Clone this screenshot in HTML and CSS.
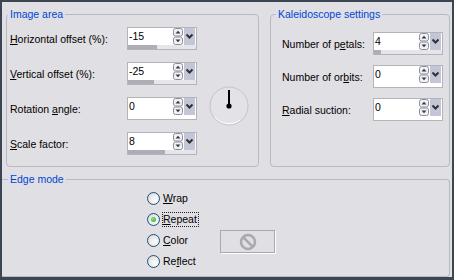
FILE: index.html
```html
<!DOCTYPE html>
<html>
<head>
<meta charset="utf-8">
<link rel="stylesheet" href="styles.css">
</head>
<body>
<div class="frame">
  <div class="toprow">
    <fieldset class="group image">
      <legend>Image area</legend>
      <div class="form">
        <span class="lbl"><u>H</u>orizontal offset (%):</span>
        <div class="spin">
          <div class="spin-top">
            <span class="val">-15</span>
            <svg class="arrows" width="10" height="17" viewBox="0 0 10 17"><rect class="btn" x="0.5" y="0.5" width="9" height="7.5" rx="2"/><path class="tri" d="M2.5 5.5 L5 2.8 L7.5 5.5Z"/><rect class="btn" x="0.5" y="9" width="9" height="7.5" rx="2"/><path class="tri" d="M2.5 11.5 L5 14.2 L7.5 11.5Z"/></svg>
            <span class="drop"><svg width="11" height="17" viewBox="0 0 11 17"><path d="M2.5 6.5 L5.5 9.5 L8.5 6.5"/></svg></span>
          </div>
          <div class="bar"><span class="fill" style="width:29px"></span></div>
        </div>
        <span class="lbl"><u>V</u>ertical offset (%):</span>
        <div class="spin">
          <div class="spin-top">
            <span class="val">-25</span>
            <svg class="arrows" width="10" height="17" viewBox="0 0 10 17"><rect class="btn" x="0.5" y="0.5" width="9" height="7.5" rx="2"/><path class="tri" d="M2.5 5.5 L5 2.8 L7.5 5.5Z"/><rect class="btn" x="0.5" y="9" width="9" height="7.5" rx="2"/><path class="tri" d="M2.5 11.5 L5 14.2 L7.5 11.5Z"/></svg>
            <span class="drop"><svg width="11" height="17" viewBox="0 0 11 17"><path d="M2.5 6.5 L5.5 9.5 L8.5 6.5"/></svg></span>
          </div>
          <div class="bar"><span class="fill" style="width:26px"></span></div>
        </div>
        <span class="lbl">Rotation <u>a</u>ngle:</span>
        <div class="spin">
          <div class="spin-top">
            <span class="val">0</span>
            <svg class="arrows" width="10" height="17" viewBox="0 0 10 17"><rect class="btn" x="0.5" y="0.5" width="9" height="7.5" rx="2"/><path class="tri" d="M2.5 5.5 L5 2.8 L7.5 5.5Z"/><rect class="btn" x="0.5" y="9" width="9" height="7.5" rx="2"/><path class="tri" d="M2.5 11.5 L5 14.2 L7.5 11.5Z"/></svg>
            <span class="drop"><svg width="11" height="17" viewBox="0 0 11 17"><path d="M2.5 6.5 L5.5 9.5 L8.5 6.5"/></svg></span>
          </div>
          <div class="bar empty"></div>
        </div>
        <span class="lbl"><u>S</u>cale factor:</span>
        <div class="spin">
          <div class="spin-top">
            <span class="val">8</span>
            <svg class="arrows" width="10" height="17" viewBox="0 0 10 17"><rect class="btn" x="0.5" y="0.5" width="9" height="7.5" rx="2"/><path class="tri" d="M2.5 5.5 L5 2.8 L7.5 5.5Z"/><rect class="btn" x="0.5" y="9" width="9" height="7.5" rx="2"/><path class="tri" d="M2.5 11.5 L5 14.2 L7.5 11.5Z"/></svg>
            <span class="drop"><svg width="11" height="17" viewBox="0 0 11 17"><path d="M2.5 6.5 L5.5 9.5 L8.5 6.5"/></svg></span>
          </div>
          <div class="bar"><span class="fill" style="width:37px"></span></div>
        </div>
        <svg class="dial" width="40" height="40" viewBox="0 0 40 40">
          <circle cx="20" cy="20" r="19" fill="#e3e2e6" stroke="#c4c4cc" stroke-width="1"/>
          <path d="M6 31 A18 18 0 0 0 31 34" fill="none" stroke="#ffffff" stroke-width="1"/>
          <line x1="20" y1="20" x2="20" y2="4" stroke="#000" stroke-width="2"/>
          <circle cx="20" cy="20" r="2.6" fill="#000"/>
        </svg>
      </div>
    </fieldset>
    <fieldset class="group kal">
      <legend>Kaleidoscope settings</legend>
      <div class="form2">
        <span class="lbl">Number of p<u>e</u>tals:</span>
        <div class="spin">
          <div class="spin-top">
            <span class="val">4</span>
            <svg class="arrows" width="10" height="17" viewBox="0 0 10 17"><rect class="btn" x="0.5" y="0.5" width="9" height="7.5" rx="2"/><path class="tri" d="M2.5 5.5 L5 2.8 L7.5 5.5Z"/><rect class="btn" x="0.5" y="9" width="9" height="7.5" rx="2"/><path class="tri" d="M2.5 11.5 L5 14.2 L7.5 11.5Z"/></svg>
            <span class="drop"><svg width="11" height="17" viewBox="0 0 11 17"><path d="M2.5 6.5 L5.5 9.5 L8.5 6.5"/></svg></span>
          </div>
          <div class="bar"><span class="fill" style="width:7px"></span></div>
        </div>
        <span class="lbl">Number of or<u>b</u>its:</span>
        <div class="spin">
          <div class="spin-top">
            <span class="val">0</span>
            <svg class="arrows" width="10" height="17" viewBox="0 0 10 17"><rect class="btn" x="0.5" y="0.5" width="9" height="7.5" rx="2"/><path class="tri" d="M2.5 5.5 L5 2.8 L7.5 5.5Z"/><rect class="btn" x="0.5" y="9" width="9" height="7.5" rx="2"/><path class="tri" d="M2.5 11.5 L5 14.2 L7.5 11.5Z"/></svg>
            <span class="drop"><svg width="11" height="17" viewBox="0 0 11 17"><path d="M2.5 6.5 L5.5 9.5 L8.5 6.5"/></svg></span>
          </div>
          <div class="bar empty"></div>
        </div>
        <span class="lbl"><u>R</u>adial suction:</span>
        <div class="spin">
          <div class="spin-top">
            <span class="val">0</span>
            <svg class="arrows" width="10" height="17" viewBox="0 0 10 17"><rect class="btn" x="0.5" y="0.5" width="9" height="7.5" rx="2"/><path class="tri" d="M2.5 5.5 L5 2.8 L7.5 5.5Z"/><rect class="btn" x="0.5" y="9" width="9" height="7.5" rx="2"/><path class="tri" d="M2.5 11.5 L5 14.2 L7.5 11.5Z"/></svg>
            <span class="drop"><svg width="11" height="17" viewBox="0 0 11 17"><path d="M2.5 6.5 L5.5 9.5 L8.5 6.5"/></svg></span>
          </div>
          <div class="bar empty"></div>
        </div>
      </div>
    </fieldset>
  </div>
  <fieldset class="group edge">
    <legend>Edge mode</legend>
    <div class="radios">
      <div class="opt"><span class="radio"></span><span class="rl"><u>W</u>rap</span></div>
      <div class="opt"><span class="radio on"></span><span class="rl focus"><u>R</u>epeat</span></div>
      <div class="opt"><span class="radio"></span><span class="rl"><u>C</u>olor</span></div>
      <div class="colorbtn">
        <svg width="18" height="18" viewBox="0 0 18 18"><circle cx="9" cy="9" r="7" fill="none" stroke="#a9a9ae" stroke-width="2.5"/><line x1="4.2" y1="4.2" x2="13.8" y2="13.8" stroke="#a9a9ae" stroke-width="2.5"/></svg>
      </div>
      <div class="opt"><span class="radio"></span><span class="rl">Re<u>f</u>lect</span></div>
    </div>
  </fieldset>
</div>
</body>
</html>
```
FILE: styles.css
```css
* { box-sizing: border-box; }
html, body { margin: 0; padding: 0; }
body {
  width: 454px;
  height: 280px;
  overflow: hidden;
  font-family: "Liberation Sans", Arial, sans-serif;
  font-size: 10.5px;
  color: #000;
}
.frame {
  width: 454px;
  height: 280px;
  background: #e0dfe3;
  border: solid #3c4552;
  border-width: 2px 2px 3px 2px;
  display: flex;
  flex-direction: column;
}
.toprow {
  display: flex;
  gap: 11px;
  padding: 6px 0 0 4px;
}
.group {
  margin: 0;
  border: 1px solid #b9b9c0;
  border-radius: 4px;
  min-width: 0;
}
legend {
  padding: 0 2px;
  margin-left: -2px;
  color: #0046d5;
  line-height: 13px;
}
.image {
  width: 253px;
  height: 159px;
  padding: 6px 0 0 3px;
}
.kal {
  width: 180px;
  height: 159px;
  padding: 11px 0 0 7px;
}
.form {
  display: grid;
  grid-template-columns: 117px 70px 52px;
  grid-template-rows: repeat(4, 23px);
  row-gap: 12px;
  align-items: center;
}
.form2 {
  margin-left: 4px;
  display: grid;
  grid-template-columns: 91px 70px;
  grid-template-rows: repeat(3, 23px);
  row-gap: 10px;
  align-items: center;
}
.lbl { grid-column: 1; white-space: nowrap; }
.spin {
  grid-column: 2;
  width: 70px;
  height: 23px;
  border: 1px solid #b3b3bb;
  background: #fff;
  display: flex;
  flex-direction: column;
}
.spin-top {
  height: 17px;
  display: flex;
  align-items: stretch;
}
.val {
  flex: 1;
  padding-left: 1px;
  line-height: 17px;
}
.arrows { display: block; margin-right: 1px; }
.arrows .btn { fill: #f1f1f5; stroke: #8e8e9a; stroke-width: 1; }
.arrows .tri { fill: #3a3a3a; }
.drop {
  width: 11px;
  margin-right: 1px;
  background: #c3c6d7;
  display: block;
}
.drop svg { display: block; }
.drop path { fill: none; stroke: #303038; stroke-width: 2; }
.bar {
  height: 4px;
  background: #e6e6ea;
  display: flex;
}
.bar.empty { background: #fff; }
.fill { display: block; height: 100%; background: #adadb5; }
.dial {
  grid-column: 3;
  grid-row: 2 / 4;
  align-self: end;
  margin: 0 0 -6px 12px;
  display: block;
}
.edge {
  margin: 6px 2px 0 0;
  height: 104px;
  border-left: none;
  border-radius: 0 4px 4px 0;
  padding: 2px 0 0 8px;
}
.radios {
  margin-left: 137px;
  display: grid;
  grid-template-columns: 73px 55px;
  grid-template-rows: repeat(4, 21px);
}
.opt {
  grid-column: 1;
  display: flex;
  align-items: center;
  gap: 3px;
  white-space: nowrap;
}
.radio {
  width: 13px;
  height: 13px;
  flex: none;
  border-radius: 50%;
  border: 1px solid #1c5180;
  background: radial-gradient(circle at 62% 62%, #ffffff 0%, #ececea 45%, #cfcfc8 100%);
  display: flex;
  align-items: center;
  justify-content: center;
}
.radio.on::after {
  content: "";
  width: 5px;
  height: 5px;
  border-radius: 50%;
  background: radial-gradient(circle at 40% 40%, #8ee58e, #21a121);
}
.rl { line-height: 13px; }
.rl.focus {
  border: 1px dotted #222;
  margin-left: -1px;
  padding-right: 1px;
}
.colorbtn {
  grid-column: 2;
  grid-row: 3;
  height: 23px;
  width: 55px;
  border: 1px solid #a8a8ae;
  box-shadow: 1px 1px 0 #fff;
  display: flex;
  align-items: center;
  justify-content: center;
}
.colorbtn svg { display: block; }
```
